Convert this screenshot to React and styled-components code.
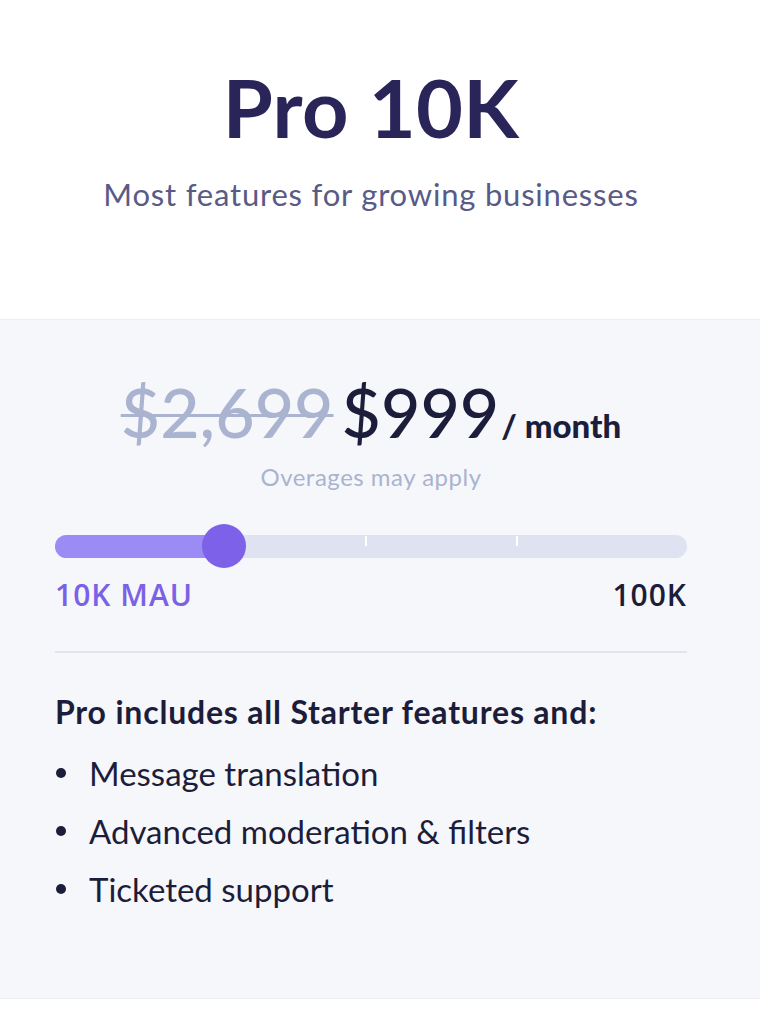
import styled, { createGlobalStyle } from 'styled-components';

const GlobalStyle = createGlobalStyle`
  html, body {
    margin: 0;
    padding: 0;
    background: #ffffff;
  }
  body {
    font-family: 'Lato', 'Noto Sans', sans-serif;
    -webkit-font-smoothing: antialiased;
  }
`;

const Page = styled.div`
  width: 760px;
  min-height: 1020px;
  background: #ffffff;
`;

const Header = styled.header`
  height: 320px;
  box-sizing: border-box;
  padding: 66px 73px 0 55px;
  text-align: center;
  border-bottom: 1px solid #eceef4;
`;

const Title = styled.h1`
  margin: 0;
  font-size: 81px;
  line-height: 1;
  font-weight: 700;
  letter-spacing: 0.3px;
  color: #2a2559;
`;

const Subtitle = styled.p`
  margin: 29px 0 0;
  font-size: 31px;
  line-height: 1.2;
  letter-spacing: 0.8px;
  color: #585b86;
`;

const Body = styled.section`
  height: 679px;
  box-sizing: border-box;
  background: #f6f7fb;
  border-bottom: 1px solid #eceef4;
  padding: 58px 73px 0 55px;
`;

const PriceRow = styled.div`
  display: flex;
  justify-content: center;
  align-items: baseline;
  gap: 8px;
  line-height: 1;
`;

const OldPrice = styled.span`
  font-size: 68px;
  font-weight: 500;
  color: #aab3cf;
  text-decoration: line-through;
  text-decoration-thickness: 3px;
`;

const NewPrice = styled.span`
  font-size: 68px;
  font-weight: 500;
  color: #1c1d3a;
`;

const Period = styled.span`
  margin-left: -6px;
  font-size: 33px;
  font-weight: 900;
  color: #1c1d3a;
`;

const Note = styled.p`
  margin: 17px 0 0;
  text-align: center;
  font-size: 24px;
  line-height: 1.2;
  letter-spacing: 0.5px;
  color: #aab3cf;
`;

const Slider = styled.div`
  position: relative;
  margin-top: 43px;
  height: 23px;
  border-radius: 12px;
  background: #dfe2f1;
`;

const Fill = styled.div`
  height: 100%;
  border-radius: 12px 0 0 12px;
  background: #9b8cf5;
`;

const Tick = styled.span`
  position: absolute;
  top: 1px;
  width: 2px;
  height: 10px;
  background: #ffffff;
`;

const Thumb = styled.span`
  position: absolute;
  top: 50%;
  width: 44px;
  height: 44px;
  margin: -22px 0 0 -22px;
  border-radius: 50%;
  background: #7d61e8;
`;

const Labels = styled.div`
  display: flex;
  justify-content: space-between;
  margin-top: 19px;
  font-family: 'Open Sans', 'Noto Sans', sans-serif;
  font-weight: 600;
  font-size: 30px;
  line-height: 1.2;
  letter-spacing: 1px;
`;

const Label = styled.span`
  color: ${p => (p.$active ? '#7b61e6' : '#1c1d3a')};
`;

const Divider = styled.hr`
  margin: 38px 0 0;
  border: 0;
  border-top: 2px solid #e2e4ee;
`;

const FeatureTitle = styled.h2`
  margin: 40px 0 0;
  font-size: 32px;
  line-height: 1.2;
  font-weight: 700;
  letter-spacing: 0.8px;
  color: #1c1d3a;
`;

const FeatureList = styled.ul`
  margin: 23px 0 0;
  padding: 0;
  list-style: none;
  display: flex;
  flex-direction: column;
  gap: 20px;
`;

const Feature = styled.li`
  display: flex;
  align-items: center;
  gap: 23px;
  font-size: 33px;
  line-height: 38px;
  color: #1c1d3a;

  &::before {
    content: '';
    width: 10px;
    height: 10px;
    margin-left: 1px;
    border-radius: 50%;
    background: #1c1d3a;
    flex-shrink: 0;
  }
`;

const ticks = [49, 73];
const features = ['Message translation', 'Advanced moderation & filters', 'Ticketed support'];

export default function App() {
  const value = 26.7;
  return (
    <Page>
      <GlobalStyle />
      <Header>
        <Title>Pro 10K</Title>
        <Subtitle>Most features for growing businesses</Subtitle>
      </Header>
      <Body>
        <PriceRow>
          <OldPrice>$2,699</OldPrice>
          <NewPrice>$999</NewPrice>
          <Period>/ month</Period>
        </PriceRow>
        <Note>Overages may apply</Note>
        <Slider>
          <Fill style={{ width: `${value}%` }} />
          {ticks.map(t => (
            <Tick key={t} style={{ left: `${t}%` }} />
          ))}
          <Thumb style={{ left: `${value}%` }} />
        </Slider>
        <Labels>
          <Label $active>10K MAU</Label>
          <Label>100K</Label>
        </Labels>
        <Divider />
        <FeatureTitle>Pro includes all Starter features and:</FeatureTitle>
        <FeatureList>
          {features.map(f => (
            <Feature key={f}>{f}</Feature>
          ))}
        </FeatureList>
      </Body>
    </Page>
  );
}
